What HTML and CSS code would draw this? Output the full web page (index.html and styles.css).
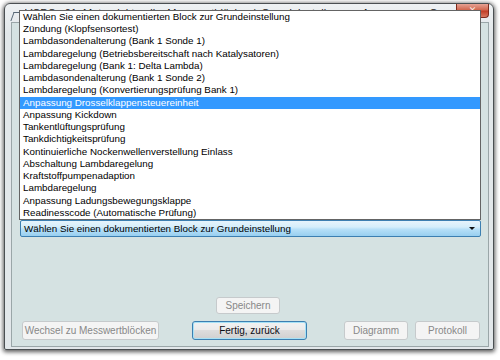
FILE: index.html
```html
<!DOCTYPE html>
<html lang="de">
<head>
<meta charset="utf-8">
<title>VCDS Grundeinstellung</title>
<link rel="stylesheet" href="styles.css">
</head>
<body>
<div class="window">
  <div class="titlebar">
    <span class="app-icon"></span>
    <span class="title">VCDS: 01 Motorelektronik, Messwertblöcke / Grundeinstellung   Anpassung  Gesamt (f) 0</span>
    <span class="close">&#x2715;</span>
  </div>
  <div class="client">
    <div class="upper"></div>
    <div class="combo">
      <span class="combo-text">Wählen Sie einen dokumentierten Block zur Grundeinstellung</span>
      <span class="combo-arrow"></span>
    </div>
    <div class="spacer"></div>
    <div class="save-row">
      <span class="btn disabled save">Speichern</span>
    </div>
    <div class="btn-row">
      <span class="btn disabled b-wechsel">Wechsel zu Messwertblöcken</span>
      <span class="btn default b-fertig">Fertig, zurück</span>
      <span class="btn disabled b-diagramm">Diagramm</span>
      <span class="btn disabled b-protokoll">Protokoll</span>
    </div>
  </div>
  <ul class="droplist">
    <li>Wählen Sie einen dokumentierten Block zur Grundeinstellung</li>
    <li>Zündung (Klopfsensortest)</li>
    <li>Lambdasondenalterung (Bank 1 Sonde 1)</li>
    <li>Lambdaregelung (Betriebsbereitschaft nach Katalysatoren)</li>
    <li>Lambdaregelung (Bank 1: Delta Lambda)</li>
    <li>Lambdasondenalterung (Bank 1 Sonde 2)</li>
    <li>Lambdaregelung (Konvertierungsprüfung Bank 1)</li>
    <li class="selected">Anpassung Drosselklappensteuereinheit</li>
    <li>Anpassung Kickdown</li>
    <li>Tankentlüftungsprüfung</li>
    <li>Tankdichtigkeitsprüfung</li>
    <li>Kontinuierliche Nockenwellenverstellung Einlass</li>
    <li>Abschaltung Lambdaregelung</li>
    <li>Kraftstoffpumpenadaption</li>
    <li>Lambdaregelung</li>
    <li>Anpassung Ladungsbewegungsklappe</li>
    <li>Readinesscode (Automatische Prüfung)</li>
  </ul>
</div>
</body>
</html>
```

FILE: styles.css
```css
html, body {
  margin: 0;
  padding: 0;
}
body {
  width: 500px;
  height: 360px;
  overflow: hidden;
  background: #ffffff;
  font-family: "Liberation Sans", Arial, sans-serif;
  font-size: 10px;
  color: #000;
}
.window {
  position: relative;
  box-sizing: border-box;
  width: 490px;
  height: 347px;
  margin: 3px 0 0 4px;
  border: 1px solid #4a4f52;
  border-radius: 6px 6px 2px 2px;
  background: linear-gradient(to bottom, #eef1f3 0, #e2e7ea 30px, #e2e7ea 100%);
  box-shadow: 0 1px 4px 1px rgba(0, 0, 0, 0.65);
  padding: 0 4px 2px 6px;
  display: flex;
  flex-direction: column;
}
.titlebar {
  height: 18px;
  display: flex;
  align-items: flex-start;
  flex: none;
}
.app-icon {
  flex: none;
  width: 8px;
  height: 8px;
  margin: 8px 4px 0 1px;
  border-top: 1px solid #5a6a78;
  border-left: 1px solid #5a6a78;
  transform: skewX(-20deg);
}
.title {
  flex: 1;
  min-width: 0;
  overflow: hidden;
  font-size: 11px;
  line-height: 18px;
  color: #1e1e1e;
  white-space: pre;
  word-spacing: 3px;
}
.close {
  flex: none;
  margin-left: 6px;
  box-sizing: border-box;
  width: 33px;
  height: 14px;
  border: 1px solid #7e2a1c;
  border-top: none;
  border-radius: 0 0 4px 4px;
  background: linear-gradient(to bottom, #e6a294 0%, #d2674f 45%, #c23f28 55%, #d8785f 100%);
  color: #f3e6e2;
  font-size: 9px;
  line-height: 13px;
  text-align: center;
  font-family: "DejaVu Sans", sans-serif;
}
.client {
  flex: 1;
  display: flex;
  flex-direction: column;
  border: 1px solid #9aa6a8;
  background: #d5e2e2;
  padding: 0 7px 6px 8px;
}
.upper {
  height: 197px;
  flex: none;
}
.combo {
  box-sizing: border-box;
  height: 17px;
  flex: none;
  display: flex;
  align-items: center;
  border: 1px solid #3c7fb1;
  border-radius: 2px;
  background: linear-gradient(to bottom, #e6f4fc 0%, #d5eefb 40%, #b6e0f8 55%, #98cff0 100%);
  padding: 0 4px 0 3px;
  font-size: 9.8px;
}
.combo-text {
  flex: 1;
  white-space: nowrap;
}
.combo-arrow {
  width: 0;
  height: 0;
  border-left: 3px solid transparent;
  border-right: 3px solid transparent;
  border-top: 3px solid #111;
  margin-right: 1px;
}
.spacer {
  flex: 1;
}
.save-row {
  display: flex;
  flex: none;
}
.btn-row {
  display: flex;
  flex: none;
  margin-top: 7px;
}
.btn {
  box-sizing: border-box;
  display: flex;
  align-items: center;
  justify-content: center;
  border-radius: 3px;
  font-size: 10px;
  white-space: nowrap;
}
.btn.disabled {
  background: #f4f4f4;
  border: 1px solid #c6cacc;
  color: #888888;
}
.btn.default {
  border: 1px solid #3c7fb1;
  box-shadow: inset 0 0 0 1px #a6e1f6;
  background: linear-gradient(to bottom, #f2f2f2 0%, #ebebeb 45%, #dddddd 50%, #cfcfcf 100%);
  color: #0c0c14;
}
.save {
  width: 64px;
  height: 17px;
  margin-left: 196px;
}
.btn-row .btn {
  height: 19px;
}
.b-wechsel {
  width: 137px;
  margin-left: 2px;
}
.b-fertig {
  width: 115px;
  margin-left: 33px;
}
.b-diagramm {
  width: 64px;
  margin-left: 37px;
}
.b-protokoll {
  width: 65px;
  margin-left: 7px;
}
.droplist {
  position: absolute;
  left: 14px;
  top: 6px;
  box-sizing: border-box;
  width: 462px;
  height: 210px;
  margin: 0;
  padding: 0;
  list-style: none;
  background: #ffffff;
  border: 1px solid #646464;
  font-size: 9.8px;
}
.droplist li {
  height: 12.235px;
  line-height: 12.235px;
  padding-left: 3px;
  white-space: nowrap;
  color: #000;
}
.droplist li.selected {
  background: #3399ff;
  color: #ffffff;
}
```
